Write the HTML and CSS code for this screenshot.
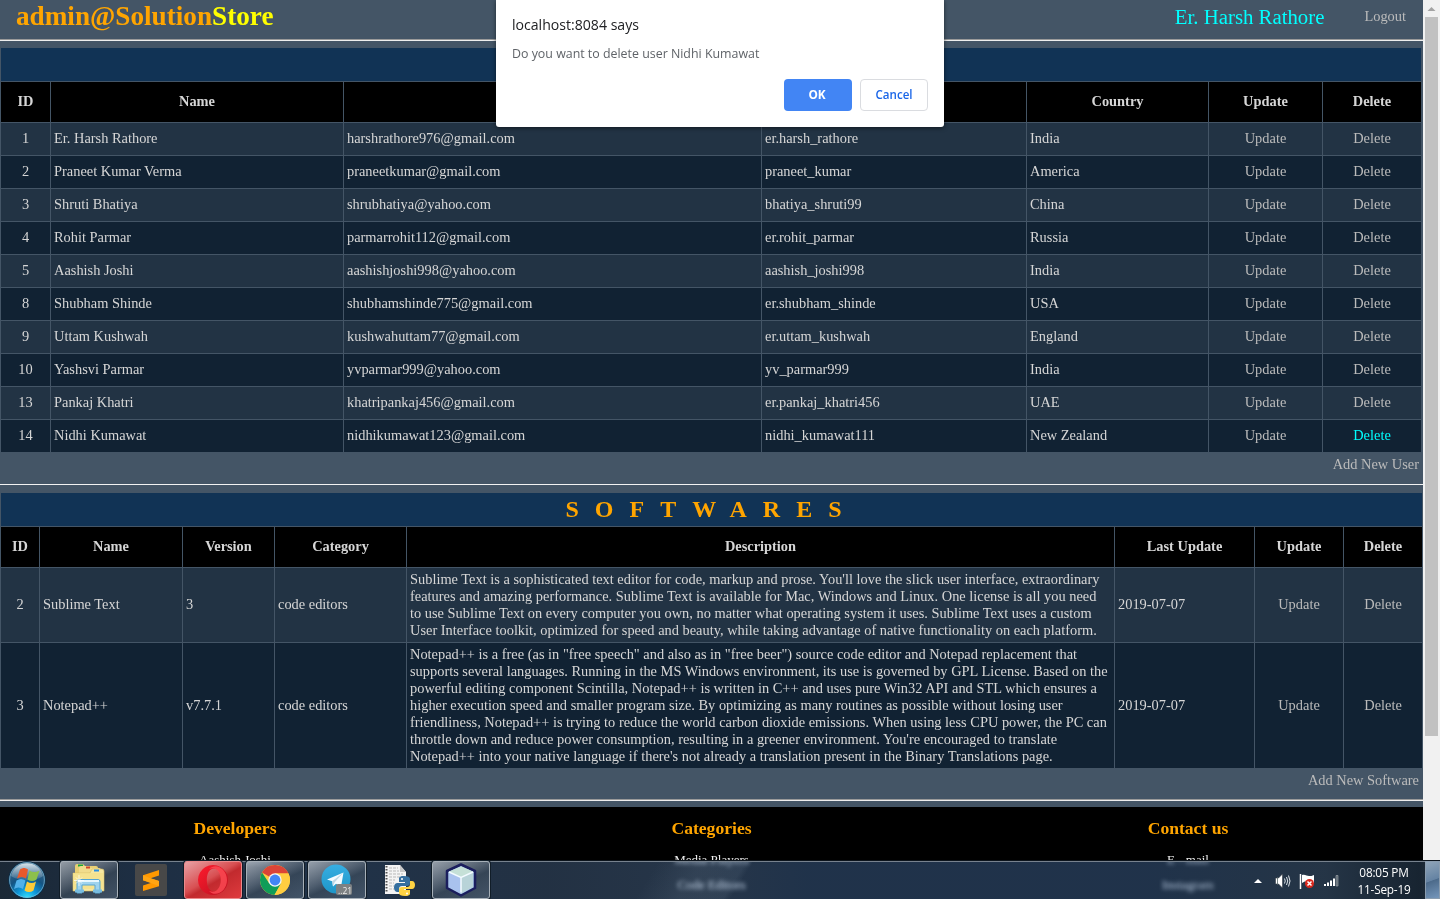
FILE: index.html
```html
<!DOCTYPE html>
<html lang="en">
<head>
<meta charset="utf-8">
<title>admin@SolutionStore</title>
<link rel="stylesheet" href="styles.css">
</head>
<body>
<div class="screen">
<div class="browser">
<main class="page">
  <header class="top">
    <h1 class="brand">admin@Solution<span class="brand-end">Store</span></h1>
    <nav class="account"><span class="who">Er. Harsh Rathore</span><a class="logout">Logout</a></nav>
  </header>
  <hr class="rule">
  <table class="grid users">
    <colgroup><col class="u1"><col class="u2"><col class="u3"><col class="u4"><col class="u5"><col class="u6"><col class="u7"></colgroup>
    <tr class="title"><th colspan="7"></th></tr>
    <tr class="head"><th>ID</th><th>Name</th><th></th><th></th><th>Country</th><th>Update</th><th>Delete</th></tr>
    <tr><td>1</td><td>Er. Harsh Rathore</td><td>harshrathore976@gmail.com</td><td>er.harsh_rathore</td><td>India</td><td class="act">Update</td><td class="act">Delete</td></tr>
    <tr><td>2</td><td>Praneet Kumar Verma</td><td>praneetkumar@gmail.com</td><td>praneet_kumar</td><td>America</td><td class="act">Update</td><td class="act">Delete</td></tr>
    <tr><td>3</td><td>Shruti Bhatiya</td><td>shrubhatiya@yahoo.com</td><td>bhatiya_shruti99</td><td>China</td><td class="act">Update</td><td class="act">Delete</td></tr>
    <tr><td>4</td><td>Rohit Parmar</td><td>parmarrohit112@gmail.com</td><td>er.rohit_parmar</td><td>Russia</td><td class="act">Update</td><td class="act">Delete</td></tr>
    <tr><td>5</td><td>Aashish Joshi</td><td>aashishjoshi998@yahoo.com</td><td>aashish_joshi998</td><td>India</td><td class="act">Update</td><td class="act">Delete</td></tr>
    <tr><td>8</td><td>Shubham Shinde</td><td>shubhamshinde775@gmail.com</td><td>er.shubham_shinde</td><td>USA</td><td class="act">Update</td><td class="act">Delete</td></tr>
    <tr><td>9</td><td>Uttam Kushwah</td><td>kushwahuttam77@gmail.com</td><td>er.uttam_kushwah</td><td>England</td><td class="act">Update</td><td class="act">Delete</td></tr>
    <tr><td>10</td><td>Yashsvi Parmar</td><td>yvparmar999@yahoo.com</td><td>yv_parmar999</td><td>India</td><td class="act">Update</td><td class="act">Delete</td></tr>
    <tr><td>13</td><td>Pankaj Khatri</td><td>khatripankaj456@gmail.com</td><td>er.pankaj_khatri456</td><td>UAE</td><td class="act">Update</td><td class="act">Delete</td></tr>
    <tr><td>14</td><td>Nidhi Kumawat</td><td>nidhikumawat123@gmail.com</td><td>nidhi_kumawat111</td><td>New Zealand</td><td class="act">Update</td><td class="act hot">Delete</td></tr>
  </table>
  <div class="add"><a>Add New User</a></div>
  <hr class="rule thin">
  <table class="grid soft">
    <colgroup><col class="s1"><col class="s2"><col class="s3"><col class="s4"><col class="s5"><col class="s6"><col class="s7"><col class="s8"></colgroup>
    <tr class="title"><th colspan="8">SOFTWARES</th></tr>
    <tr class="head"><th>ID</th><th>Name</th><th>Version</th><th>Category</th><th>Description</th><th>Last Update</th><th>Update</th><th>Delete</th></tr>
    <tr><td>2</td><td>Sublime Text</td><td>3</td><td>code editors</td><td class="desc">Sublime Text is a sophisticated text editor for code, markup and prose. You'll love the slick user interface, extraordinary<br>features and amazing performance. Sublime Text is available for Mac, Windows and Linux. One license is all you need<br>to use Sublime Text on every computer you own, no matter what operating system it uses. Sublime Text uses a custom<br>User Interface toolkit, optimized for speed and beauty, while taking advantage of native functionality on each platform.</td><td>2019-07-07</td><td class="act">Update</td><td class="act">Delete</td></tr>
    <tr><td>3</td><td>Notepad++</td><td>v7.7.1</td><td>code editors</td><td class="desc">Notepad++ is a free (as in "free speech" and also as in "free beer") source code editor and Notepad replacement that<br>supports several languages. Running in the MS Windows environment, its use is governed by GPL License. Based on the<br>powerful editing component Scintilla, Notepad++ is written in C++ and uses pure Win32 API and STL which ensures a<br>higher execution speed and smaller program size. By optimizing as many routines as possible without losing user<br>friendliness, Notepad++ is trying to reduce the world carbon dioxide emissions. When using less CPU power, the PC can<br>throttle down and reduce power consumption, resulting in a greener environment. You're encouraged to translate<br>Notepad++ into your native language if there's not already a translation present in the Binary Translations page.</td><td>2019-07-07</td><td class="act">Update</td><td class="act">Delete</td></tr>
  </table>
  <div class="add last"><a>Add New Software</a></div>
  <hr class="rule">
  <footer class="foot">
    <section><h3>Developers</h3><p>Aashish Joshi</p></section>
    <section><h3>Categories</h3><p>Media Players</p><p>Code Editors</p></section>
    <section><h3>Contact us</h3><p>E - mail</p><p>Instagram</p></section>
  </footer>
</main>
<div class="scroll"><svg class="arrow" width="17" height="17"><path d="M4.500 11l4-4 4 4z" fill="#a3a3a3"/></svg><div class="thumb"></div></div>
</div>

<div class="dialog">
  <h2>localhost:8084 says</h2>
  <p>Do you want to delete user Nidhi Kumawat</p>
  <div class="buttons"><button class="ok">OK</button><button class="cancel">Cancel</button></div>
</div>

<div class="taskbar">
  <div class="start">
    <svg width="40" height="38" viewBox="0 0 40 38">
      <defs><radialGradient id="orb" cx=".5" cy="1" r=".95"><stop offset="0" stop-color="#36e4ff"/><stop offset=".3" stop-color="#0d95d8"/><stop offset=".6" stop-color="#145483"/><stop offset="1" stop-color="#496b85"/></radialGradient>
      <linearGradient id="gloss" x2="0" y2="1"><stop stop-color="#e8f3f8" stop-opacity=".9"/><stop offset="1" stop-color="#a9c3d4" stop-opacity=".15"/></linearGradient></defs>
      <circle cx="20" cy="19" r="18.400" fill="url(#orb)" stroke="#0d2c45"/><circle cx="20" cy="19" r="17.400" fill="none" stroke="#7ebbd8" stroke-opacity=".7"/>
      <path d="M4 15C8-2 32-2 36 15 29 21 11 20 4 15z" fill="url(#gloss)"/>
      <path d="M13 8.500c3-2 5-2 8 0l-2 9c-3-2-6-2-9 0z" fill="#e9592b"/>
      <path d="M22.500 9.500c3 2 6 2 10 0l-3 9c-3 2-6 2-9 0z" fill="#8cc04b"/>
      <path d="M9.500 19.500c3-2 6-2 9 0l-2.500 8.500c-3-2-6-2-9 0z" fill="#52b1ea"/>
      <path d="M20 20.500c3 2 6 2 9 0l-2.500 9c-3 2-6 2-9 0z" fill="#fdcb39"/>
    </svg>
  </div>
  <div class="app open">
    <svg width="38" height="34" viewBox="0 0 38 34">
      <path d="M5 3q0-2 2-2h6l2 2h11q2 0 2 2v22H5z" fill="#e9cf74"/><rect x="8" y="1.500" width="5" height="2" fill="#18a53c"/>
      <path d="M9 5q0-2 2-2h7l2 2h9q2 0 2 2v20H9z" fill="#f1dc8c"/><rect x="16" y="3.500" width="4" height="2" fill="#d5472b"/>
      <path d="M3 10h17l2-4h10q2 0 2 2v20H3z" fill="#f7e7a0" stroke="#d9bd61" stroke-width=".6"/><rect x="24" y="6.500" width="5" height="2" fill="#2b8fe0"/>
      <path d="M3 10h30v16H3z" fill="#f4df88" opacity=".7"/>
      <path d="M7 30V18.500q0-2 2-2h19q2 0 2 2V30h-5v-8H12v8z" fill="#9ed3ee" stroke="#56a5d2"/><path d="M8 18h21" stroke="#e6f7ff" stroke-width="2"/>
      <path d="M5 28h9M23 28h9" stroke="#79bde0" stroke-width="3"/>
      <path d="M9 12v11M4 17.500h10M6 14.500l6 6M12 14.500l-6 6" stroke="#fff" stroke-width=".7"/>
    </svg>
  </div>
  <div class="app sublime">
    <svg width="32" height="32" viewBox="0 0 32 32"><rect width="32" height="32" rx="2" fill="#484848"/><path d="M8 11.200L24 6v5.500L15.500 14.300 24 17v5.200L8 27v-5.500l8.500-2.700L8 16.200z" fill="#ff9800"/><path d="M8 16.200l16 5.900V17l-8.500-2.700L8 11.200z" fill="#ffa413"/></svg>
  </div>
  <div class="app open opera">
    <svg width="32" height="32" viewBox="0 0 32 32"><defs><linearGradient id="op" x2="1" y2="1"><stop stop-color="#ff1b2d"/><stop offset="1" stop-color="#ba1020"/></linearGradient></defs><path fill-rule="evenodd" d="M16 1a15 15 0 1 0 .01 0zM17 4.500c4.600 0 6.700 5 6.700 11.500s-2.100 11.500-6.700 11.500S9.800 22.500 9.800 16 12.400 4.500 17 4.500z" fill="url(#op)"/><path d="M12 5c7-7 18 0 18 11s-11 18-18 11c8 3 11.700-4 11.700-11S20 2 12 5z" fill="#ff5159" opacity=".75"/></svg>
  </div>
  <div class="app open chrome">
    <svg width="32" height="32" viewBox="0 0 32 32"><circle cx="16" cy="16" r="15" fill="#ffcd40"/><path d="M16 16L3 8.500A15 15 0 0 1 29.500 9.500H16z" fill="#db4437"/><path d="M3 8.500A15 15 0 0 0 15.500 31L22 19.500 10 19z" fill="#0f9d58"/><path d="M16 9.500h13.500A15 15 0 0 1 15.500 31L22 19.500z" fill="#ffcd40"/><circle cx="16" cy="16" r="6.700" fill="#f3f5f6"/><circle cx="16" cy="16" r="5.400" fill="#4285f4"/></svg>
  </div>
  <div class="app open telegram">
    <svg width="38" height="34" viewBox="0 0 38 34"><defs><linearGradient id="tg" x2="0" y2="1"><stop stop-color="#37aee2"/><stop offset="1" stop-color="#1e96c8"/></linearGradient></defs><circle cx="18" cy="16" r="14.500" fill="url(#tg)"/><path d="M9 16.500L25.500 9.500 23 24l-5-3.300-3 2.800-.8-5.200z" fill="#f5fbff"/><path d="M14.200 18.300L25.500 9.500 16.500 19.500 15 23.500z" fill="#c0d8e5"/><rect x="18" y="21" width="16" height="11" rx="2" fill="#7d8183"/></svg><span class="count">..21</span>
  </div>
  <div class="app python">
    <svg width="32" height="34" viewBox="0 0 32 34"><path d="M1 2h15l6 7v22H1z" fill="#f4f4f4"/><path d="M16 2v7h6z" fill="#c8c8c8"/><path d="M2.500 3v27" stroke="#555" stroke-width="2" stroke-dasharray="1.500 1.500"/><path d="M5 5h9M5 8h10M5 11h14M5 14h13M5 17h6M5 20h5M5 23h5M5 26h5" stroke="#b9b9b9" stroke-dasharray="3 1"/><path d="M21 14c-5 0-5 2-5 3v3h6v1h-8c-4 0-4 9 0 9h2v-3c0-2 1-3 3-3h5c2 0 3-1 3-3v-4c0-2-2-3-6-3z" fill="#356f9f" transform="translate(-1 -1)"/><path d="M21 33c5 0 5-2 5-3v-3h-6v-1h8c4 0 4-8 0-8h-2v3c0 2-1 3-3 3h-5c-2 0-3 1-3 3v3c0 2 2 3 6 3z" fill="#ffd343"/><circle cx="18" cy="16" r="1" fill="#fff"/><circle cx="23" cy="30.500" r="1" fill="#fff"/></svg>
  </div>
  <div class="app open cube">
    <svg width="34" height="34" viewBox="0 0 34 34"><path d="M17 1.500L31 8v17L17 32.500 3 25V8z" fill="#a9c6e9" stroke="#1b1e5d" stroke-width="2.500" stroke-linejoin="round"/><path d="M17 3.500L29 8.500 17 14 5 8.500z" fill="#c5e0d7"/><path d="M5 9.500l12 5v16L5 24z" fill="#a9c2ee"/><path d="M17 14.500l12-5V24l-12 6.500z" fill="#b8d3d8"/><path d="M5 9l12 5.500L29 9M17 14.500v15" fill="none" stroke="#f3fbff" stroke-width="1.500"/></svg>
  </div>
  <div class="tray">
    <svg width="90" height="20" viewBox="0 0 90 20">
      <path d="M4 12l4-4 4 4z" fill="#fff"/>
      <path d="M25.500 7h3l4-4v14l-4-4h-3z" fill="#fff" stroke="#333b44" stroke-width=".6"/><path d="M27.500 6v8" stroke="#566" stroke-width=".8"/><path d="M34.500 7.500q1.500 2.500 0 5M36.500 6q2.500 4 0 8M38.500 4.500q3 5.500 0 11" fill="none" stroke="#dfe5ea"/>
      <path d="M50.500 3v15" stroke="#fff" stroke-width="1.500"/><path d="M52 4c3-1 5 1 7 1s3 0 5-1v8c-3 1-5 0-7-1s-3 0-5 1z" fill="#fff"/><circle cx="59.500" cy="12.500" r="4.500" fill="#d9271c"/><path d="M57.500 10.500l4 4M61.500 10.500l-4 4" stroke="#fff" stroke-width="1.500"/>
      <path d="M74 13h2v2h-2zM77 11.500h2V15h-2zM80 9.500h2V15h-2zM83 7.500h2V15h-2z" fill="#fff"/><path d="M86 4.500h2V15h-2z" fill="#5b656e" stroke="#a6adb3" stroke-width=".6"/>
    </svg>
  </div>
  <div class="clock"><span>08:05 PM</span><span>11-Sep-19</span></div>
  <div class="desk"></div>
</div>
</div>
</body>
</html>
```
FILE: styles.css
```css
* { box-sizing: border-box; }
html, body { margin: 0; height: 100%; overflow: hidden; }
body { font-family: "Liberation Serif", "Times New Roman", serif; font-size: 14.4px; line-height: 17px; color: #d6d6d6; background: #456; }
.screen { position: relative; width: 1440px; height: 899px; overflow: hidden; }
.browser { display: flex; height: 899px; }
.page { width: 1423px; background: #456; flex: none; }
.top { display: flex; justify-content: space-between; height: 39px; padding: 0 17px 0 16px; line-height: 33px; }
.brand { margin: 0; font-size: 27.2px; line-height: 33px; color: #ffa500; }
.brand-end { color: #ff0; }
.account { display: flex; gap: 40px; }
.who { font-size: 20.8px; color: #0ff; }
.logout { color: #bbb; }
.rule { margin: 0; border: 0; height: 2px; background: #eee; border-top: 1px solid #9a9a9a; }
.rule.thin { height: 1px; border: 0; background: #f2f2f2; }
.grid { table-layout: fixed; border-collapse: separate; border-spacing: 1px; }
.users { width: 1422px; margin-top: 6px; }
.soft { width: 1423px; margin-top: 7px; }
.u1 { width: 49px; } .u2 { width: 292px; } .u3 { width: 417px; } .u4 { width: 264px; } .u5 { width: 181px; } .u6 { width: 113px; } .u7 { width: 98px; }
.s1 { width: 38px; } .s2 { width: 142px; } .s3 { width: 91px; } .s4 { width: 131px; } .s5 { width: 707px; } .s6 { width: 139px; } .s7 { width: 88px; } .s8 { width: 78px; }
.grid td { padding: 0 3px 1px; height: 32px; background: #234; white-space: nowrap; }
.grid tr:nth-child(even) td { background: #123; }
.grid td:first-child, .grid td.act { text-align: center; }
.grid td.act { color: #bbb; }
.grid td.hot { color: #0ff; }
.grid td.desc { padding: 3px; }
.title th { height: 33px; padding: 0; background: #135; color: #ffa500; font-size: 24px; line-height: 33px; letter-spacing: 16px; }
.head th { height: 40px; padding: 0 0 1px; background: #000; }
.add { height: 31px; padding: 3px 4px 0 0; text-align: right; color: #bbb; }
.add.last { height: 30px; }
.foot { display: grid; grid-template-columns: 470px 483px 470px; height: 92px; margin-top: 6px; background: #000; text-align: center; overflow: hidden; }
.foot h3 { margin: 11px 0 9px; font-size: 17.6px; line-height: 20px; color: #ffa500; }
.foot p { margin: 0; font-size: 13px; line-height: 25px; color: #eee; }
.scroll { width: 17px; background: #f1f1f1; }
.arrow { display: block; }
.thumb { width: 13px; height: 719px; margin-left: 2px; background: #c1c1c1; }

.dialog { position: absolute; left: 496px; top: 0; width: 448px; height: 127px; padding: 16px; background: #fff; border-radius: 0 0 3px 3px; box-shadow: 0 1px 4px rgba(0,0,0,.55); font-family: "Open Sans", "Noto Sans", sans-serif; }
.dialog h2 { margin: 0; font-size: 14.1px; font-weight: 400; line-height: 18px; color: #202124; }
.dialog p { margin: 11px 0 0; font-size: 12.4px; line-height: 17px; color: #5f6368; }
.buttons { display: flex; justify-content: flex-end; gap: 8px; margin-top: 17px; }
.buttons button { width: 68px; height: 32px; padding: 0 2px 2px 0; border-radius: 4px; font: 700 11.8px "Open Sans", sans-serif; }
.ok { border: 0; background: #4285f4; color: #fff; }
.cancel { border: 1px solid #dadce0; background: #fff; color: #1a66e8; }
.buttons .cancel { padding: 0 0 1px; font-size: 11.6px; font-weight: 600; }

.taskbar { position: absolute; left: 0; top: 860px; width: 1440px; height: 39px; display: flex; align-items: flex-start; border-top: 1px solid #0c141c; box-shadow: inset 0 1px #77828e; backdrop-filter: blur(2px) brightness(1.8); background: linear-gradient(122deg, transparent 45%, rgba(120,140,160,.14) 48%, rgba(120,140,160,.14) 51%, transparent 51.5%), linear-gradient(90deg, rgba(28,42,56,.96) 0, rgba(32,50,72,.92) 9%, rgba(42,66,95,.76) 22%, rgba(48,68,93,.72) 38%, rgba(64,90,122,.6) 49%, rgba(50,79,116,.64) 56%, rgba(50,79,116,.64) 80%, rgba(46,66,88,.8) 92%, rgba(24,37,50,.98) 98.5%, rgb(24,37,50) 100%); font-family: "Open Sans", sans-serif; }
.start { width: 60px; padding-left: 7px; }
.start svg { display: block; }
.app { position: relative; flex: none; width: 58px; height: 38px; display: flex; align-items: center; justify-content: center; margin-right: 4px; }
.open { border: 1px solid #a7b0b8; border-radius: 3px; background: linear-gradient(155deg, rgba(220,225,230,.62) 0, rgba(150,160,170,.4) 42%, rgba(70,85,100,.55) 56%, rgba(95,112,130,.55) 100%); box-shadow: 0 0 0 1px #111d28; }
.opera { background: linear-gradient(150deg, #e8a1a4 0, #d84f52 45%, #c22a2e 55%, #df3b3e 100%); border-color: #eb8a8c; }
.python { padding-left: 2px; }
.count { position: absolute; left: 29px; top: 23px; font-size: 8.5px; line-height: 11px; color: #eee; }
.tray { margin: 10px 0 0 756px; width: 96px; height: 20px; flex: none; }
.tray svg { display: block; }
.clock { display: flex; flex-direction: column; width: 76px; padding-top: 3px; text-align: center; font-size: 11.8px; line-height: 17px; color: #fff; letter-spacing: -.2px; }
.desk { margin-left: auto; width: 15px; height: 38px; border: 1px solid #8a9cae; background: linear-gradient(160deg, #8fa4b8, #6583a3 50%, #4c6a8a 52%, #7596ba); }
```
